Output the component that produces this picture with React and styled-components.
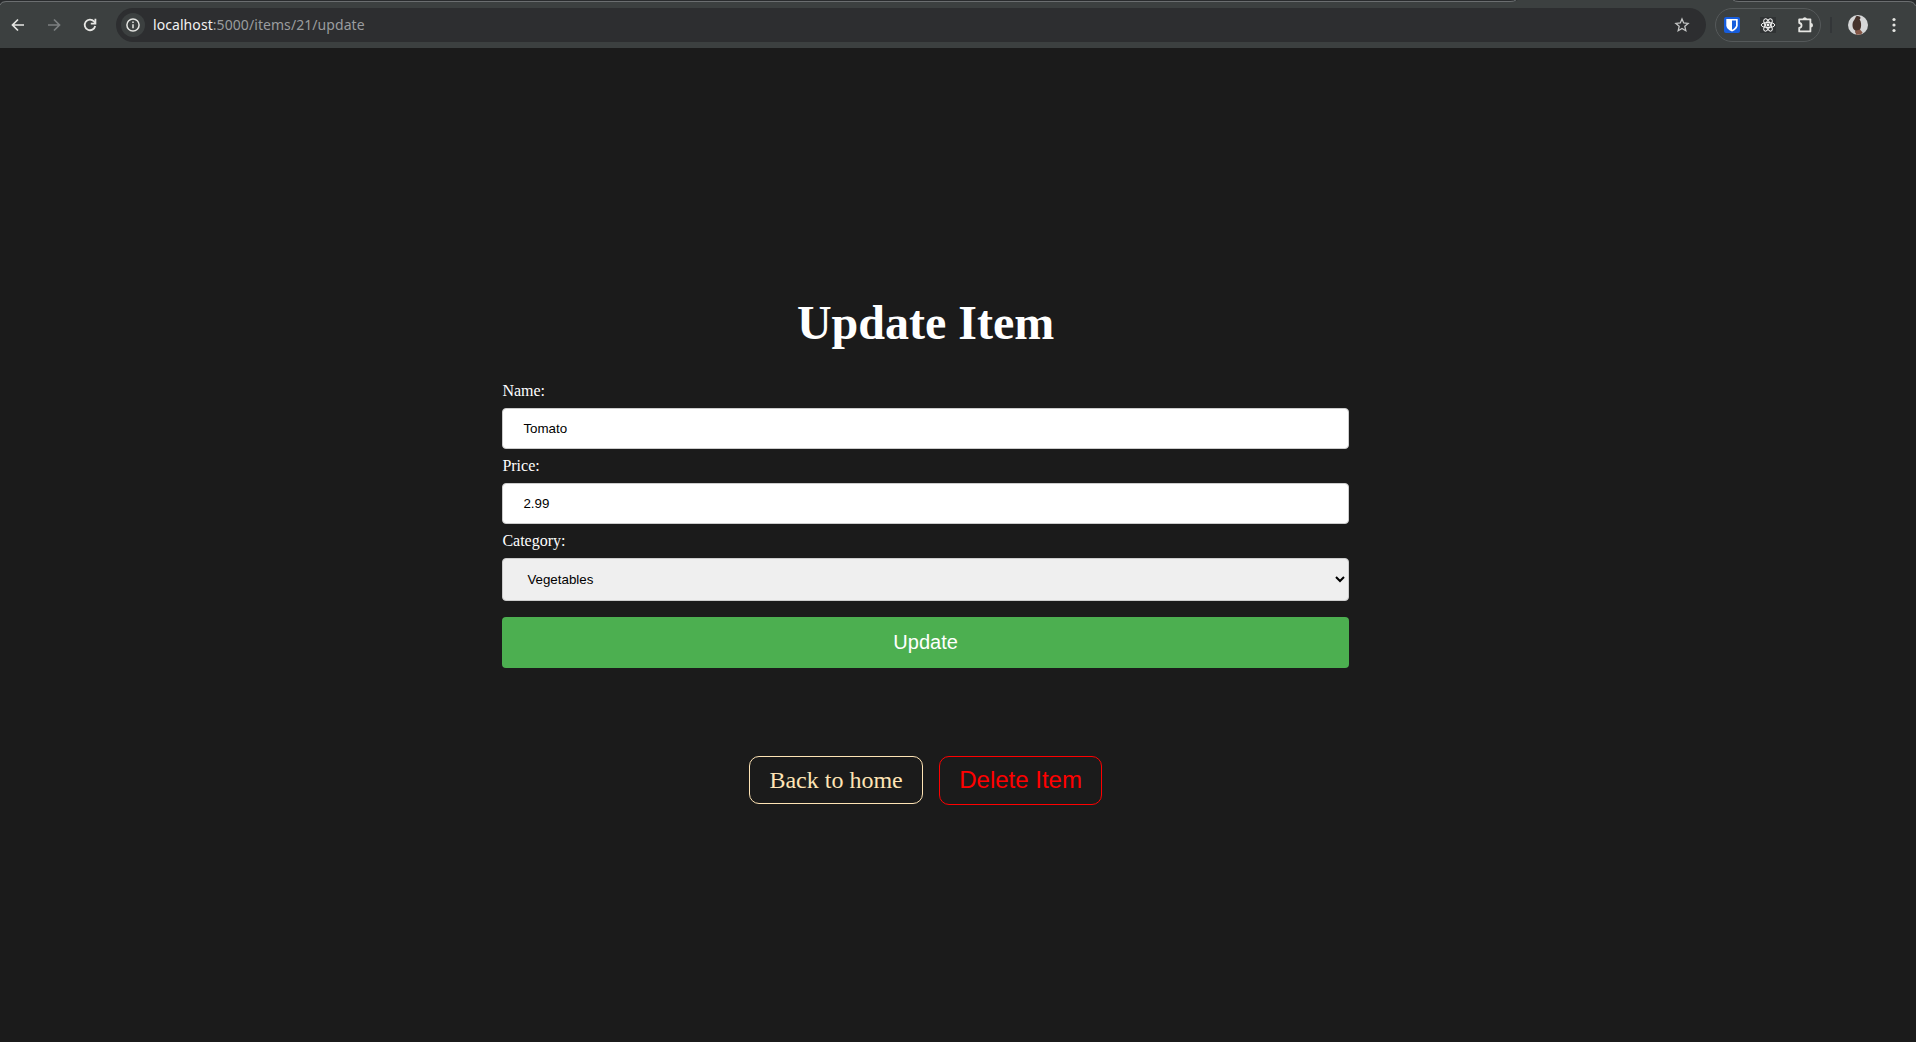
import React from "react";
import styled, { createGlobalStyle } from "styled-components";

const Global = createGlobalStyle`
  * { box-sizing: border-box; }
  body { margin: 0; background: #1b1b1b; }
`;
const Page = styled.div`
  height: 1042px;
  display: flex;
  flex-direction: column;
  background: #1b1b1b;
  font-family: "Liberation Serif", "Times New Roman", serif;
  overflow: hidden;
`;
const Chrome = styled.header`
  position: relative;
  height: 48px;
  flex: none;
  background: #3c4040;
  padding: 8px 0 6px;
  display: flex;
  align-items: center;
`;
const Edge = styled.svg`
  position: absolute;
  left: 0;
  top: 0;
`;
const NavGroup = styled.nav`
  display: flex;
  gap: 12px;
  padding-left: 6px;
  width: 116px;
`;
const IconButton = styled.button`
  width: 24px;
  height: 34px;
  padding: 0;
  border: 0;
  background: none;
  display: grid;
  place-items: center;
  color: ${(p) => p.$color || "#e6e6e3"};
`;
const AddressBar = styled.div`
  width: 1590px;
  height: 34px;
  border-radius: 17px;
  background: #2d2e30;
  display: flex;
  align-items: center;
  padding: 0 12px 0 5px;
`;
const SiteInfo = styled.span`
  width: 24px;
  height: 24px;
  border-radius: 50%;
  background: #3c4040;
  display: grid;
  place-items: center;
`;
const Url = styled.span`
  flex: 1;
  margin-left: 8px;
  font: 14px/20px "Noto Sans", sans-serif;
  letter-spacing: 0.07px;
  color: #9a9c9e;
`;
const Host = styled.span`
  color: #f2f2f2;
`;
const Extensions = styled.div`
  width: 106px;
  height: 34px;
  margin-left: 9px;
  border: 1px solid #55595a;
  border-radius: 17px;
  display: flex;
  gap: 12px;
  padding-left: 4px;
  align-items: center;
`;
const Separator = styled.span`
  width: 2px;
  height: 16px;
  margin: 0 16px 0 9px;
  background: #333638;
`;
const Menu = styled(IconButton)`
  margin-left: 14px;
`;
const Main = styled.main`
  width: 846.4px;
  margin-left: 502.4px;
  padding-top: 243px;
  display: flex;
  flex-direction: column;
`;
const Title = styled.h1`
  margin: 0 0 27px;
  font-size: 48px;
  line-height: 64px;
  text-align: center;
  color: #fff;
`;
const Form = styled.form`
  display: flex;
  flex-direction: column;
`;
const Label = styled.label`
  font-size: 16px;
  line-height: 18px;
  color: #fff;
`;
const Input = styled.input`
  height: 41px;
  margin: 8px 0;
  padding: 12px 20px;
  border: 1px solid #ccc;
  border-radius: 4px;
  font: 13.333px "Liberation Sans", Arial, sans-serif;
  color: #000;
  background: #fff;
`;
const Select = styled.select`
  height: 43px;
  margin: 8px 0;
  padding: 12px 20px;
  border: 1px solid #ccc;
  border-radius: 4px;
  font: 13.333px "Liberation Sans", Arial, sans-serif;
  color: #000;
  background-color: #efefef;
`;
const Submit = styled.button`
  height: 51px;
  margin: 8px 0;
  border: 0;
  border-radius: 4px;
  background: #4caf50;
  color: #fff;
  font: 20px "Liberation Sans", Arial, sans-serif;
`;
const Actions = styled.div`
  display: flex;
  justify-content: center;
  align-items: flex-start;
  gap: 16px;
  margin-top: 80px;
`;
const HomeLink = styled.a`
  width: 174px;
  height: 48px;
  border: 1px solid #ffe4b5;
  border-radius: 10px;
  font-size: 24px;
  line-height: 47px;
  text-align: center;
  color: #ffe4b5;
`;
const Delete = styled.button`
  width: 163px;
  height: 49px;
  padding: 0 0 1px;
  border: 1px solid #f00;
  border-radius: 10px;
  background: none;
  font: 24px "Liberation Sans", Arial, sans-serif;
  color: #f00;
`;

const Arrow = ({ flip }) => (
  <svg width="16" height="16" viewBox="0 0 16 16" fill="none" stroke="currentColor" strokeWidth="1.7" transform={flip ? "scale(-1 1)" : undefined}>
    <path d="M14 8H3M8 2.5L2.5 8L8 13.5" />
  </svg>
);
const Reload = () => (
  <svg width="16" height="16" viewBox="0 0 16 16" fill="none" stroke="currentColor" strokeWidth="1.8">
    <path d="M13.2 9A5.3 5.3 0 1 1 12 4.4L13.3 6" />
    <path d="M13.4 1.8V6.6H8.8" />
  </svg>
);
const Info = () => (
  <svg width="16" height="16" viewBox="0 0 16 16" fill="none" stroke="#e6e6e3" strokeWidth="1.5">
    <circle cx="8" cy="8" r="6.1" />
    <path d="M8 7.2V11.3M8 4.6V6" />
  </svg>
);
const Star = () => (
  <svg width="16" height="16" viewBox="0 0 16 16" fill="none" stroke="currentColor" strokeWidth="1.3">
    <path d="M8 1.9L9.7 6L14.1 6.4L10.8 9.3L11.8 13.7L8 11.4L4.2 13.7L5.2 9.3L1.9 6.4L6.3 6Z" />
  </svg>
);
const Shield = () => (
  <svg width="16" height="16" viewBox="0 0 16 16">
    <rect width="16" height="16" rx="2" fill="#175ddc" />
    <path d="M2.3 2H13.7V8.2C13.7 11 10.9 13.2 8 14.5C5.1 13.2 2.3 11 2.3 8.2Z" fill="#fff" />
    <path d="M8 3.6H12V8.2C12 10.1 9.9 11.7 8 12.7Z" fill="#175ddc" />
  </svg>
);
const Atom = () => (
  <svg width="16" height="16" viewBox="0 0 16 16" fill="none" stroke="#f4f4f4" strokeWidth="1">
    <rect width="16" height="16" fill="#303334" stroke="none" />
    <ellipse cx="8" cy="8" rx="6.8" ry="2.6" />
    <ellipse cx="8" cy="8" rx="6.8" ry="2.6" transform="rotate(60 8 8)" />
    <ellipse cx="8" cy="8" rx="6.8" ry="2.6" transform="rotate(120 8 8)" />
    <circle cx="8" cy="8" r="1.4" fill="#f4f4f4" stroke="none" />
  </svg>
);
const Puzzle = () => (
  <svg width="18" height="18" viewBox="0 0 18 18" fill="none" stroke="currentColor" strokeWidth="1.8">
    <path d="M3.2 3.3H14.4V15.4H3.2V12C6.3 11.6 6.3 7.4 3.2 7Z" strokeLinejoin="round" />
    <path d="M6.6 3A2.3 2.3 0 0 1 11 3ZM14.8 7.1A2.2 2.2 0 0 1 14.8 11.5Z" fill="currentColor" stroke="none" />
  </svg>
);
const PuzzleButton = styled(IconButton)`
  padding-left: 1px;
`;
const Avatar = () => (
  <svg width="20" height="20" viewBox="0 0 20 20">
    <circle cx="10" cy="10" r="10" fill="#d6d7d8" />
    <path d="M8 1.4C9.5 .4 12.4 1.2 12.6 3L11.6 4.4C13.3 6.5 13.4 10 12.8 12.8L11.5 15.8L7.4 18L7.4 15.6C4.8 14.6 4 11 4.8 7.6C5.4 5.4 6.8 4.6 7 3.4Z" fill="#46332c" />
    <path d="M7.4 15.8L12 14.6L14.6 17.6L13 19.4L8 19.7Z" fill="#855747" />
  </svg>
);
const Dots = () => (
  <svg width="16" height="16" viewBox="0 0 16 16" fill="currentColor">
    <circle cx="8" cy="2.5" r="1.6" /><circle cx="8" cy="8" r="1.6" /><circle cx="8" cy="13.5" r="1.6" />
  </svg>
);

export default function App() {
  return (
    <Page>
      <Global />
      <Chrome>
        <Edge width="1916" height="6" fill="none">
          <path d="M0 0H1518Q1516 1 1512 1H6Q1 1 0 5Z M1732 0H1916V6Q1915 1 1909 1H1738Q1735 1 1732 0Z" fill="#292b2d" />
          <path d="M0 5Q1 1.5 6 1.5H1510Q1514 1.5 1516 0M1733 0Q1735 1.5 1739 1.5H1908Q1914 1.5 1915.5 6" stroke="#6b6e70" />
        </Edge>
        <NavGroup>
          <IconButton><Arrow /></IconButton>
          <IconButton $color="#7c7f80"><Arrow flip /></IconButton>
          <IconButton><Reload /></IconButton>
        </NavGroup>
        <AddressBar>
          <SiteInfo><Info /></SiteInfo>
          <Url><Host>localhost</Host>:5000/items/21/update</Url>
          <IconButton $color="#c5c6c6"><Star /></IconButton>
        </AddressBar>
        <Extensions>
          <IconButton><Shield /></IconButton>
          <IconButton><Atom /></IconButton>
          <PuzzleButton><Puzzle /></PuzzleButton>
        </Extensions>
        <Separator />
        <Avatar />
        <Menu><Dots /></Menu>
      </Chrome>
      <Main>
        <Title>Update Item</Title>
        <Form>
          <Label htmlFor="name">Name:</Label>
          <Input id="name" defaultValue="Tomato" />
          <Label htmlFor="price">Price:</Label>
          <Input id="price" defaultValue="2.99" />
          <Label htmlFor="category">Category:</Label>
          <Select id="category" defaultValue="Vegetables">
            <option>Vegetables</option>
          </Select>
          <Submit type="button">Update</Submit>
        </Form>
        <Actions>
          <HomeLink>Back to home</HomeLink>
          <Delete type="button">Delete Item</Delete>
        </Actions>
      </Main>
    </Page>
  );
}
